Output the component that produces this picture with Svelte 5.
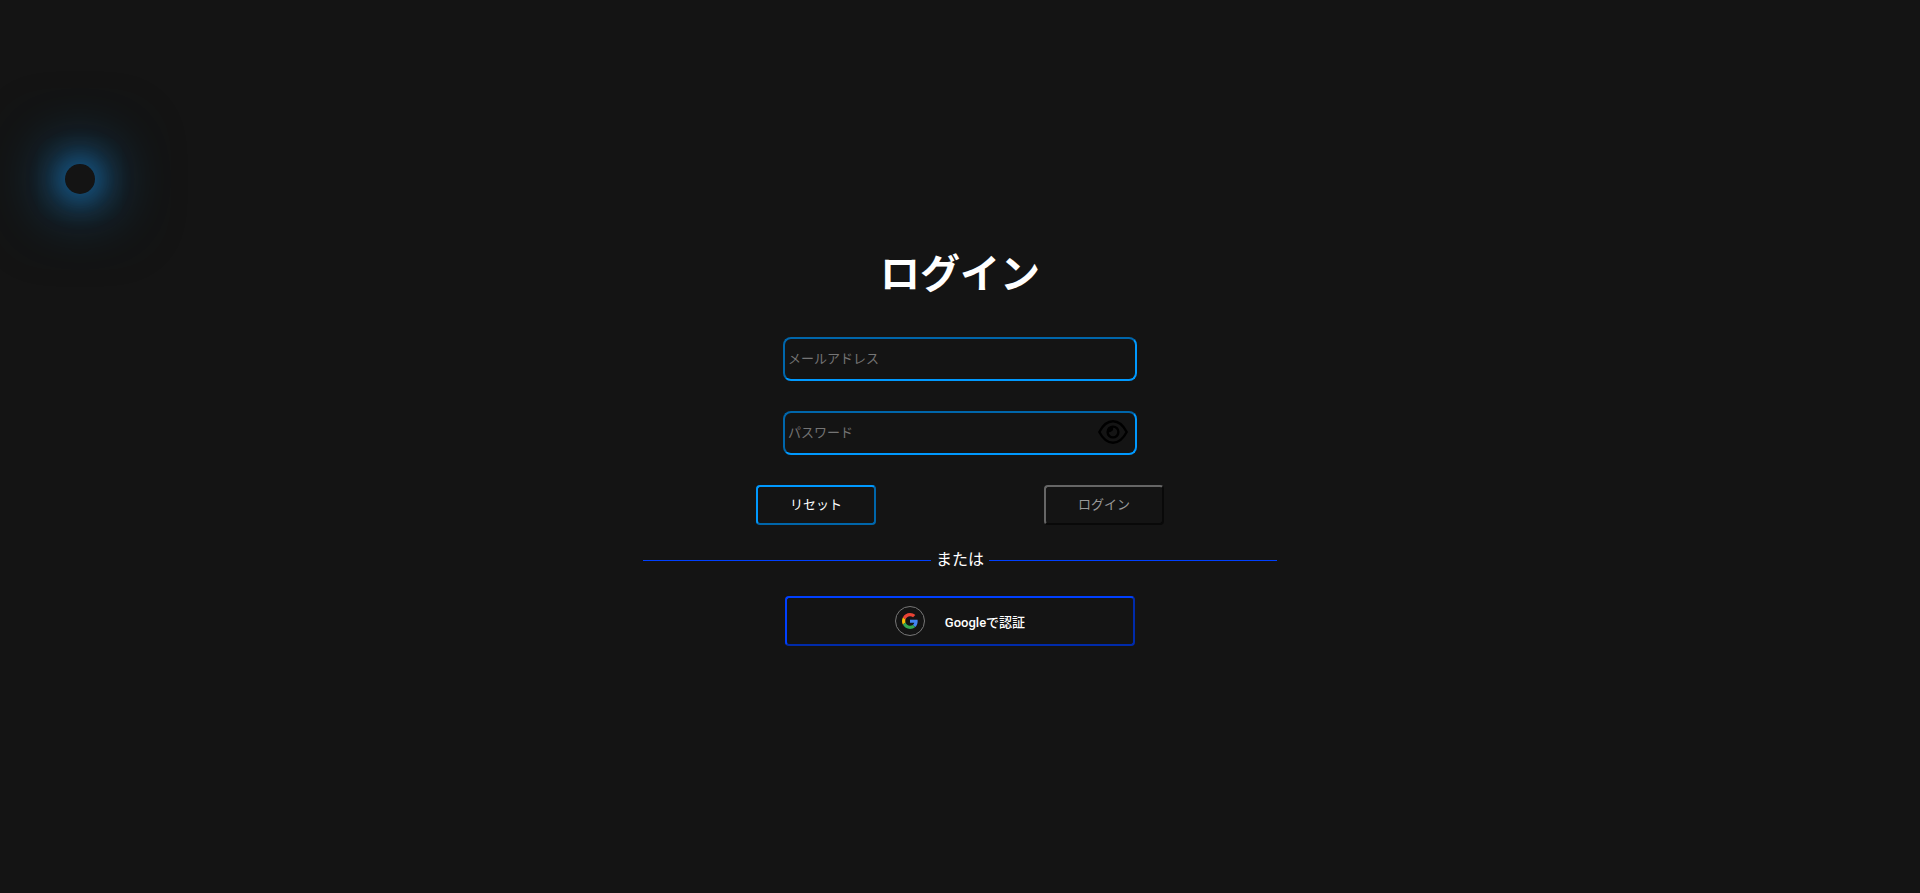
<script lang="ts">
  let email = $state('');
  let password = $state('');
  let visible = $state(false);

  function reset() {
    email = '';
    password = '';
  }
</script>

<div class="glow" aria-hidden="true"></div>

<main>
  <h1>ログイン</h1>

  <form onsubmit={(e) => e.preventDefault()}>
    <div class="field">
      <input type="email" aria-label="メールアドレス" placeholder="メールアドレス" bind:value={email} />
    </div>
    <div class="field">
      <input
        type={visible ? 'text' : 'password'}
        aria-label="パスワード"
        placeholder="パスワード"
        bind:value={password}
      />
      <button class="eye" type="button" aria-label="パスワードを表示" onclick={() => (visible = !visible)}>
        <svg viewBox="0 0 30 24" width="30" height="24" fill="none" stroke="#000" stroke-width="2.4">
          <path d="M1.3 12C4.8 5.300 9.300 1.300 15 1.300S25.200 5.300 28.700 12C25.200 18.700 20.700 22.700 15 22.700S4.800 18.700 1.300 12Z" />
          <circle cx="15" cy="12" r="5.400" />
          <path d="M10 12.500V8L14.500 6.500Q15.800 9 14.600 10.500Q13 12.300 10 12.500Z" fill="#000" stroke="none" />
        </svg>
      </button>
    </div>
    <div class="actions">
      <button class="action" type="button" onclick={reset}>リセット</button>
      <button class="action" type="submit" disabled={!email || !password}>ログイン</button>
    </div>
  </form>

  <div class="divider">または</div>

  <button class="google" type="button">
    <span class="badge">
      <svg viewBox="0 0 48 48" width="16" height="16">
        <path fill="#EA4335" d="M24 9.500c3.540 0 6.710 1.220 9.210 3.600l6.850-6.850C35.900 2.380 30.470 0 24 0 14.620 0 6.510 5.380 2.560 13.220l7.980 6.190C12.430 13.720 17.740 9.500 24 9.500z" />
        <path fill="#4285F4" d="M46.980 24.550c0-1.570-.15-3.090-.38-4.550H24v9.020h12.940c-.58 2.960-2.260 5.480-4.780 7.180l7.730 6c4.510-4.180 7.090-10.360 7.090-17.650z" />
        <path fill="#FBBC05" d="M10.530 28.590c-.48-1.450-.76-2.990-.76-4.590s.27-3.140.76-4.590l-7.980-6.190C.92 16.460 0 20.120 0 24c0 3.880.92 7.540 2.560 10.780l7.970-6.190z" />
        <path fill="#34A853" d="M24 48c6.480 0 11.930-2.130 15.890-5.810l-7.730-6c-2.150 1.450-4.920 2.300-8.160 2.300-6.260 0-11.570-4.220-13.470-9.910l-7.980 6.190C6.510 42.620 14.620 48 24 48z" />
      </svg>
    </span>
    Googleで認証
  </button>
</main>

<style>
  :global(body) {
    background: #141414;
    overflow: hidden;
  }

  .glow {
    position: absolute;
    top: 164px;
    left: 65px;
    width: 30px;
    height: 30px;
    border-radius: 50%;
    box-shadow:
      0 0 30px 6px rgba(26, 158, 255, 0.5),
      0 0 60px 16px rgba(26, 158, 255, 0.4),
      0 0 40px 76px rgba(20, 120, 100, 0.02);
  }

  main {
    min-height: 100vh;
    box-sizing: border-box;
    padding-bottom: 4px;
    display: flex;
    flex-direction: column;
    align-items: center;
    justify-content: center;
    color: #fff;
    font-family: 'Liberation Sans', 'Noto Sans CJK JP', sans-serif;
  }

  h1 {
    margin: 0;
    padding: 1px 0 33px;
    font-size: 40px;
    line-height: 60px;
    font-weight: 700;
  }

  form {
    width: 408px;
    max-width: 100%;
    display: flex;
    flex-direction: column;
    align-items: center;
    gap: 30px;
  }

  .field {
    position: relative;
    width: 354px;
  }

  input {
    display: block;
    box-sizing: border-box;
    width: 100%;
    height: 44px;
    padding: 0 3px 2px;
    border: 2px inset #0099ff;
    border-radius: 8px;
    background: transparent;
    color: #fff;
    font: 13px 'Liberation Sans', 'Noto Sans CJK JP', sans-serif;
  }

  input::placeholder {
    color: #757575;
  }

  .eye {
    position: absolute;
    top: 9px;
    right: 9px;
    padding: 0;
    border: 0;
    background: none;
    cursor: pointer;
  }

  .eye svg {
    display: block;
  }

  .actions {
    width: 100%;
    display: flex;
    justify-content: space-between;
  }

  .action,
  .google {
    border: 2px outset #0099ff;
    border-radius: 4px;
    background: transparent;
    color: #fff;
    cursor: pointer;
  }

  .action {
    width: 120px;
    height: 40px;
    padding: 0 0 4px;
    font: 13px 'Liberation Sans', 'Noto Sans CJK JP', sans-serif;
  }

  .action:disabled {
    border-style: solid;
    border-color: #666 #090909 #090909 #666;
    color: #999;
    cursor: default;
  }

  .divider {
    width: 33%;
    margin: 23px 0 24px;
    display: flex;
    align-items: center;
    gap: 5px;
    font-size: 16px;
    line-height: 24px;
  }

  .divider::before,
  .divider::after {
    content: '';
    flex: 1;
    height: 1px;
    background: #0040ff;
  }

  .google {
    width: 350px;
    height: 50px;
    padding: 0;
    border-color: #0040ff;
    display: flex;
    align-items: center;
    justify-content: center;
    gap: 20px;
    font: 500 13px Roboto, 'Noto Sans CJK JP', sans-serif;
  }

  .badge {
    box-sizing: border-box;
    width: 30px;
    height: 30px;
    border: 1px solid #777;
    border-radius: 50%;
    display: grid;
    place-items: center;
  }

  .badge svg {
    display: block;
  }
</style>
